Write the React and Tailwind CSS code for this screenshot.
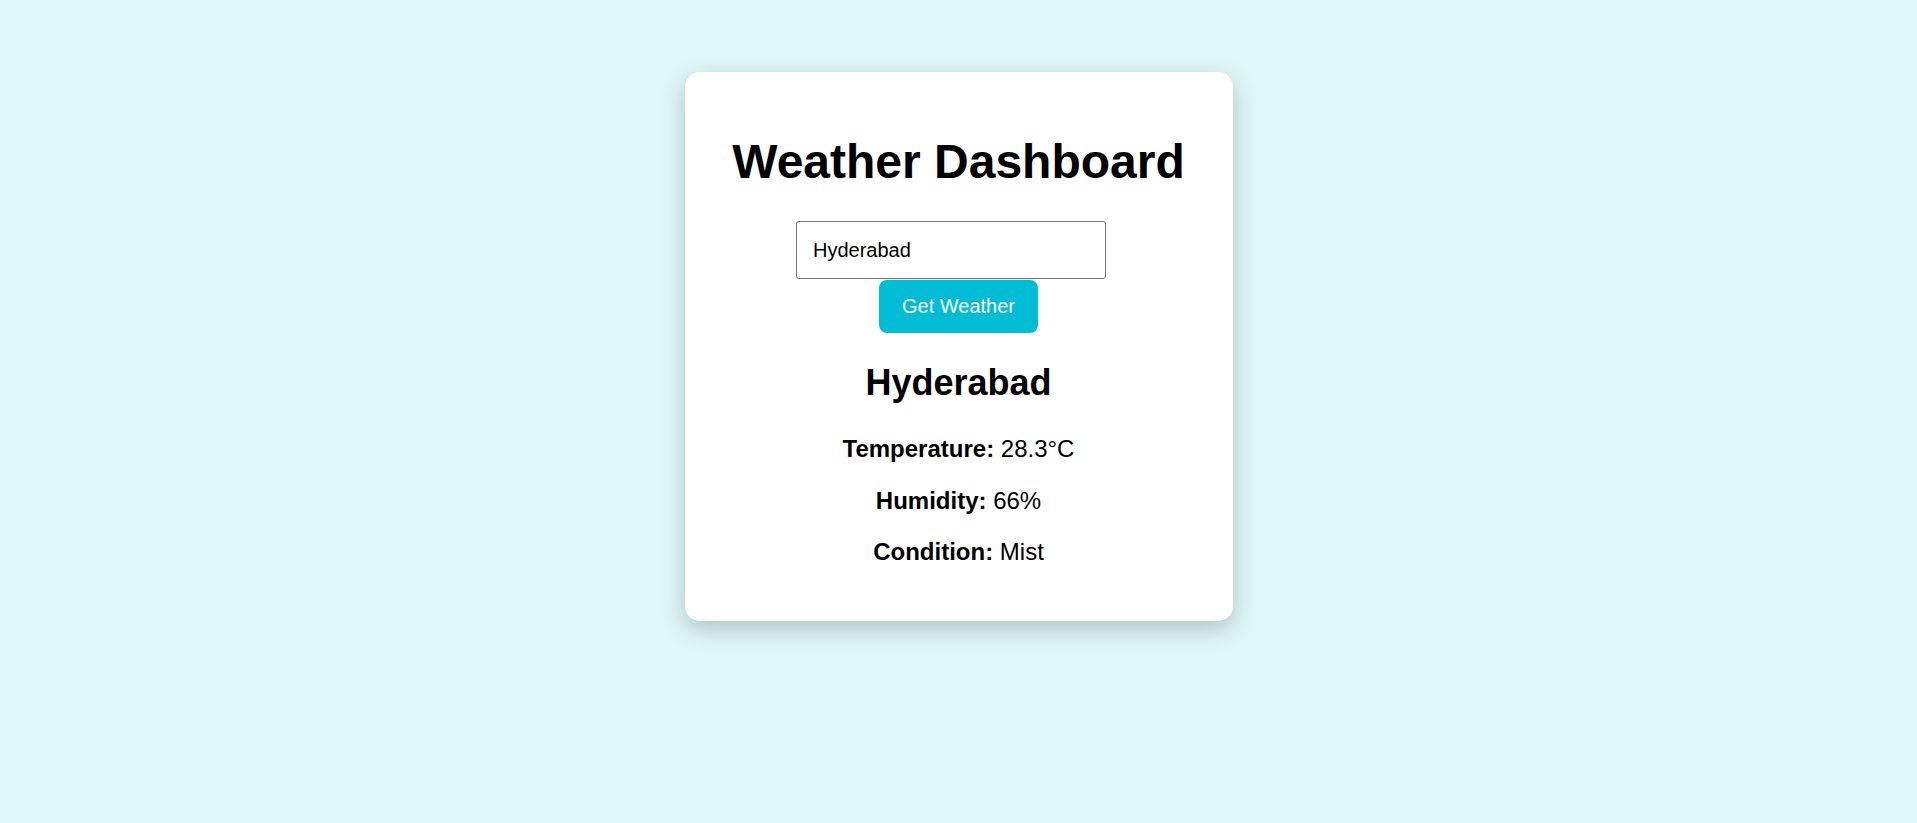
import React from "react";

export default function App() {
  return (
    <div
      className="min-h-screen w-full bg-[#e0f7fa] flex justify-center pt-[72px] text-black"
      style={{ fontFamily: '"Liberation Sans", Arial, sans-serif' }}
    >
      <div className="w-[548px] h-[549px] bg-white rounded-[15px] shadow-[0_8px_24px_rgba(0,0,0,0.22)] px-[30px] pt-[30px] text-center self-start">
        <h1 className="mt-[32px] mb-[32px] text-[48px] leading-[55px] font-bold">Weather Dashboard</h1>
        <div className="flex flex-col items-center">
          <input
            type="text"
            defaultValue="Hyderabad"
            className="w-[310px] h-[58px] border border-[#767676] rounded-[3px] px-[16px] text-[20px] text-black mr-[15px] outline-none bg-white"
            style={{ fontFamily: '"Liberation Sans", Arial, sans-serif' }}
          />
          <button
            className="mt-[1px] h-[53px] px-[23px] bg-[#00bcd4] text-white text-[20px] rounded-[8px] leading-[23px]"
            style={{ fontFamily: '"Liberation Sans", Arial, sans-serif' }}
          >
            Get Weather
          </button>
        </div>
        <h2 className="mt-[29px] text-[36px] leading-[41px] font-bold">Hyderabad</h2>
        <p className="mt-[32px] text-[24px] leading-[27.6px]">
          <strong className="font-bold">Temperature:</strong> 28.3°C
        </p>
        <p className="mt-[24px] text-[24px] leading-[27.6px]">
          <strong className="font-bold">Humidity:</strong> 66%
        </p>
        <p className="mt-[24px] text-[24px] leading-[27.6px]">
          <strong className="font-bold">Condition:</strong> Mist
        </p>
      </div>
    </div>
  );
}
